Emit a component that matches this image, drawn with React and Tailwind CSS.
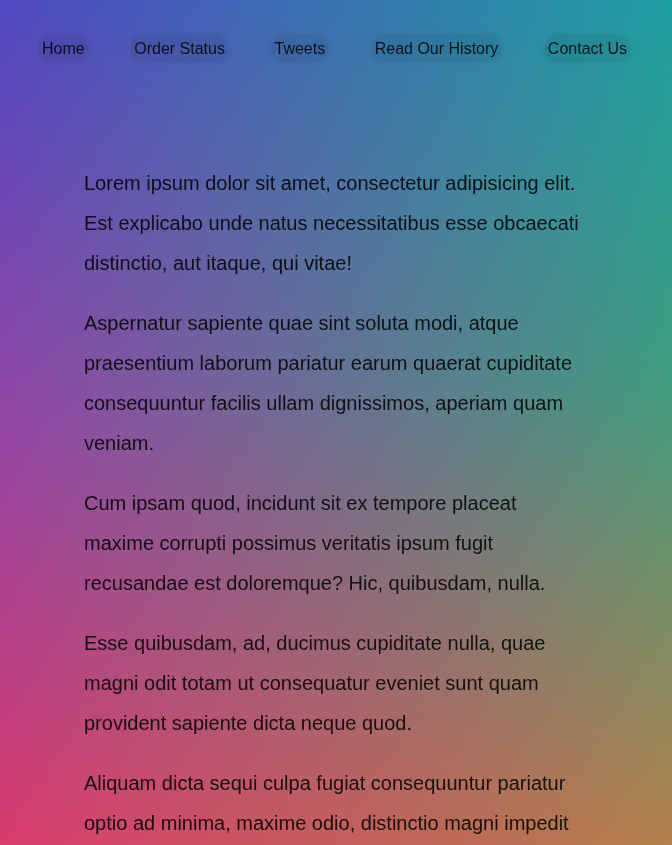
export default function App() {
  const links = ["Home", "Order Status", "Tweets", "Read Our History", "Contact Us"];
  const paras = [
    "Lorem ipsum dolor sit amet, consectetur adipisicing elit. Est explicabo unde natus necessitatibus esse obcaecati distinctio, aut itaque, qui vitae!",
    "Aspernatur sapiente quae sint soluta modi, atque praesentium laborum pariatur earum quaerat cupiditate consequuntur facilis ullam dignissimos, aperiam quam veniam.",
    "Cum ipsam quod, incidunt sit ex tempore placeat maxime corrupti possimus veritatis ipsum fugit recusandae est doloremque? Hic, quibusdam, nulla.",
    "Esse quibusdam, ad, ducimus cupiditate nulla, quae magni odit totam ut consequatur eveniet sunt quam provident sapiente dicta neque quod.",
    "Aliquam dicta sequi culpa fugiat consequuntur pariatur optio ad minima, maxime odio, distinctio magni impedit iusto. Officiis, nesciunt.",
  ];
  return (
    <div className="relative min-h-screen font-['Liberation_Sans',Arial,sans-serif]">
      <div className="fixed inset-0 -z-10 bg-[linear-gradient(to_bottom,#5149c2_0%,#9446a6_50%,#da3c6e_100%)]">
        <div className="absolute inset-0 bg-[linear-gradient(to_bottom,#1fa0a2_0%,#3f9d80_45%,#b2804a_100%)] [mask-image:linear-gradient(to_right,transparent,black)]" />
      </div>
      <nav className="flex justify-between pt-[35px] pl-[38px] pr-[41px]">
        {links.map((l) => (
          <a
            key={l}
            href="#"
            className="rounded-full bg-black/[0.07] px-1 py-[4px] text-[16px] leading-[19px] text-black/85 shadow-[0_0_6px_rgba(0,0,0,0.08)]"
          >
            {l}
          </a>
        ))}
      </nav>
      <main className="mx-auto w-3/4 pt-[101px] pb-10">
        {paras.map((p, i) => (
          <p key={i} className="mb-5 text-[20px] leading-[40px] text-black/85">
            {p}
          </p>
        ))}
      </main>
    </div>
  );
}
